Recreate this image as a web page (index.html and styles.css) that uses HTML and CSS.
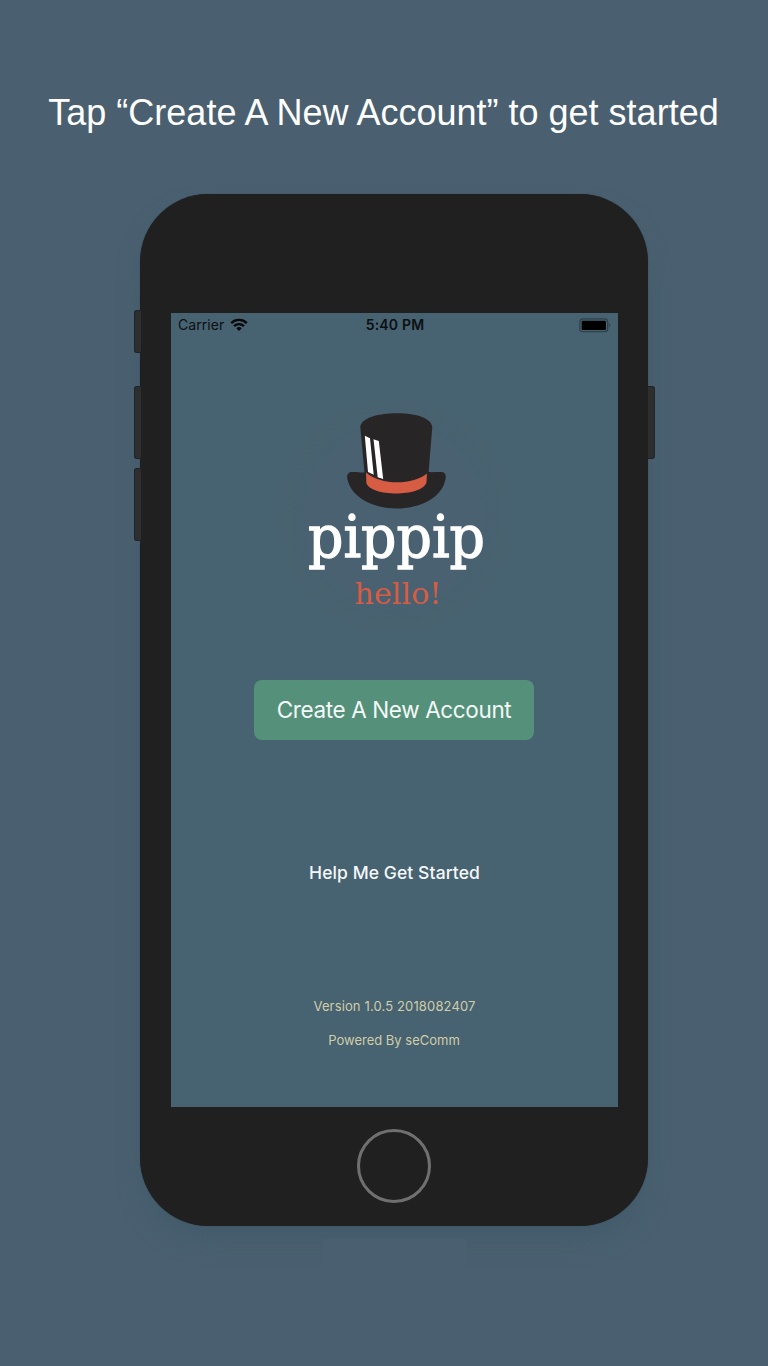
FILE: index.html
```html
<!DOCTYPE html>
<html lang="en">
<head>
<meta charset="utf-8">
<title>Pippip</title>
<link rel="stylesheet" href="styles.css">
</head>
<body>
<main class="page">
  <h1 class="headline">Tap “Create A New Account” to get started</h1>
  <div class="phone">
    <span class="shadow-gap"></span>
    <span class="side-key mute"></span>
    <span class="side-key volume-up"></span>
    <span class="side-key volume-down"></span>
    <span class="side-key power"></span>
    <section class="screen">
      <header class="status">
        <div class="carrier"><span>Carrier</span>
          <svg width="18" height="14" viewBox="0 0 18 14"><g fill="none" stroke="#050708" stroke-width="2.3"><path d="M1.2 5.1C5.5.9 12.5.9 16.8 5.1"/><path d="M4 8.1C6.8 5.4 11.2 5.4 14 8.1"/></g><path d="M6.3 10.2Q9 7.800 11.7 10.2L9 13Z" fill="#050708"/></svg>
        </div>
        <div class="time">5:40 PM</div>
        <svg class="battery" width="33" height="15" viewBox="0 0 33 15"><rect x=".9" y=".9" width="27.8" height="12.8" rx="3" fill="none" stroke="#2d4049" stroke-width="1.2"/><rect x="2.7" y="2.7" width="24.2" height="9.2" rx="1" fill="#000"/><path d="M30.3 5.1q2 2.2 0 4.4z" fill="#2d4049"/></svg>
      </header>
      <svg class="logo" width="240" height="220" viewBox="275 400 240 220">
        <path fill="#272526" d="M360.3 427C361 418.500 377 413.300 397 413.300S431.500 418.500 432.300 427L428.600 472C434 472.500 439 471.300 443 472.300C446 473.500 446.200 476.500 445.300 480C441.500 498 420 508.500 396.500 508.500S351.500 497 347.600 480C346.800 476.300 347 473.500 350 472.300C354 471.300 359 472.500 364.500 472.400Z"/>
        <path fill="#d65c43" d="M366 472.500C380 485.300 413 485.500 427 473.500L426.500 482.500C422 497.200 370 497 366.300 482.800Z"/>
        <path fill="#fff" d="M364.800 435.800L370 438.200L373.700 474.700L368 472ZM373.500 439.300L378.800 441L383.200 479L377.700 477.200Z"/>
        <text class="wordmark" x="308" y="557" textLength="177" lengthAdjust="spacingAndGlyphs">pippip</text>
        <text class="greeting" x="354.500" y="604" textLength="87" lengthAdjust="spacingAndGlyphs">hello!</text>
      </svg>
      <button class="create">Create A New Account</button>
      <a class="help">Help Me Get Started</a>
      <p class="meta version">Version 1.0.5 2018082407</p>
      <p class="meta powered">Powered By seComm</p>
    </section>
    <div class="home"></div>
  </div>
</main>
</body>
</html>
```
FILE: styles.css
```css
* { box-sizing: border-box; }
body { margin: 0; background: #4a6070; }
.page { width: 768px; height: 1366px; overflow: hidden; display: flex; flex-direction: column; background: #4a6070; }
.headline { margin: 92px 1px 0 0; height: 42px; text-align: center; white-space: nowrap; color: #fff; font: 400 36px/42px "Liberation Sans", Arial, sans-serif; }
.phone { position: relative; width: 508px; height: 1032px; margin: 60px 0 0 140px; padding: 119px 30px 0 31px; border-radius: 68px; background: #202020; box-shadow: 0 15px 28px -8px rgba(60, 86, 102, .75), 0 0 1px #26343a; display: flex; flex-direction: column; align-items: center; }
.shadow-gap { position: absolute; left: 183px; top: 1045px; width: 143px; height: 26px; background: #4a6070; }
.side-key { position: absolute; width: 7px; height: 73px; left: -6.5px; border: 1px solid #1c2529; border-right: 0; border-radius: 3px 0 0 3px; background: #2e2e2e; }
.mute { top: 116px; height: 43px; }
.volume-up { top: 192px; }
.volume-down { top: 274px; }
.power { top: 192px; left: 508px; border: 1px solid #1c2529; border-left: 0; border-radius: 0 3px 3px 0; }
.screen { width: 447px; height: 794px; flex: none; background: radial-gradient(circle at 224px 203px, #496170 80px, #476270 126px); display: flex; flex-direction: column; align-items: center; font-family: Inter, sans-serif; }
.status { width: 100%; height: 24px; margin-bottom: 1px; padding: 0 6px 0 7px; display: grid; grid-template-columns: 1fr auto 1fr; align-items: center; color: #0b1013; font-size: 14px; line-height: 24px; }
.carrier { display: flex; align-items: center; gap: 6px; }
.carrier span { letter-spacing: .05px; }
.time { font-weight: 600; letter-spacing: .2px; }
.battery { justify-self: end; }
.logo { margin-top: 62px; margin-left: 1px; flex: none; }
.wordmark { font: 400 57px "DejaVu Serif", serif; fill: #fff; stroke: #fff; stroke-width: 1.3px; }
.greeting { font: 400 29px "DejaVu Serif", serif; fill: #d65c43; }
.create { width: 280px; height: 60px; margin: 60px 1px 0 0; padding: 0; border: 0; border-radius: 8px; background: #55917a; color: #f4faf7; font: 400 22.5px/60px Inter, sans-serif; letter-spacing: -.37px; }
.help { margin-top: 120px; line-height: 25px; font-size: 17.5px; font-weight: 500; letter-spacing: .08px; color: #f5f8fa; }
.meta { margin: 0; line-height: 18px; font-size: 13px; color: #d2cda9; }
.version { margin-top: 112px; letter-spacing: .14px; }
.powered { margin-top: 16px; margin-right: 1px; }
.home { width: 74px; height: 74px; margin: 22px 1px 0 0; flex: none; border: 3px solid #707070; border-radius: 50%; }
```
